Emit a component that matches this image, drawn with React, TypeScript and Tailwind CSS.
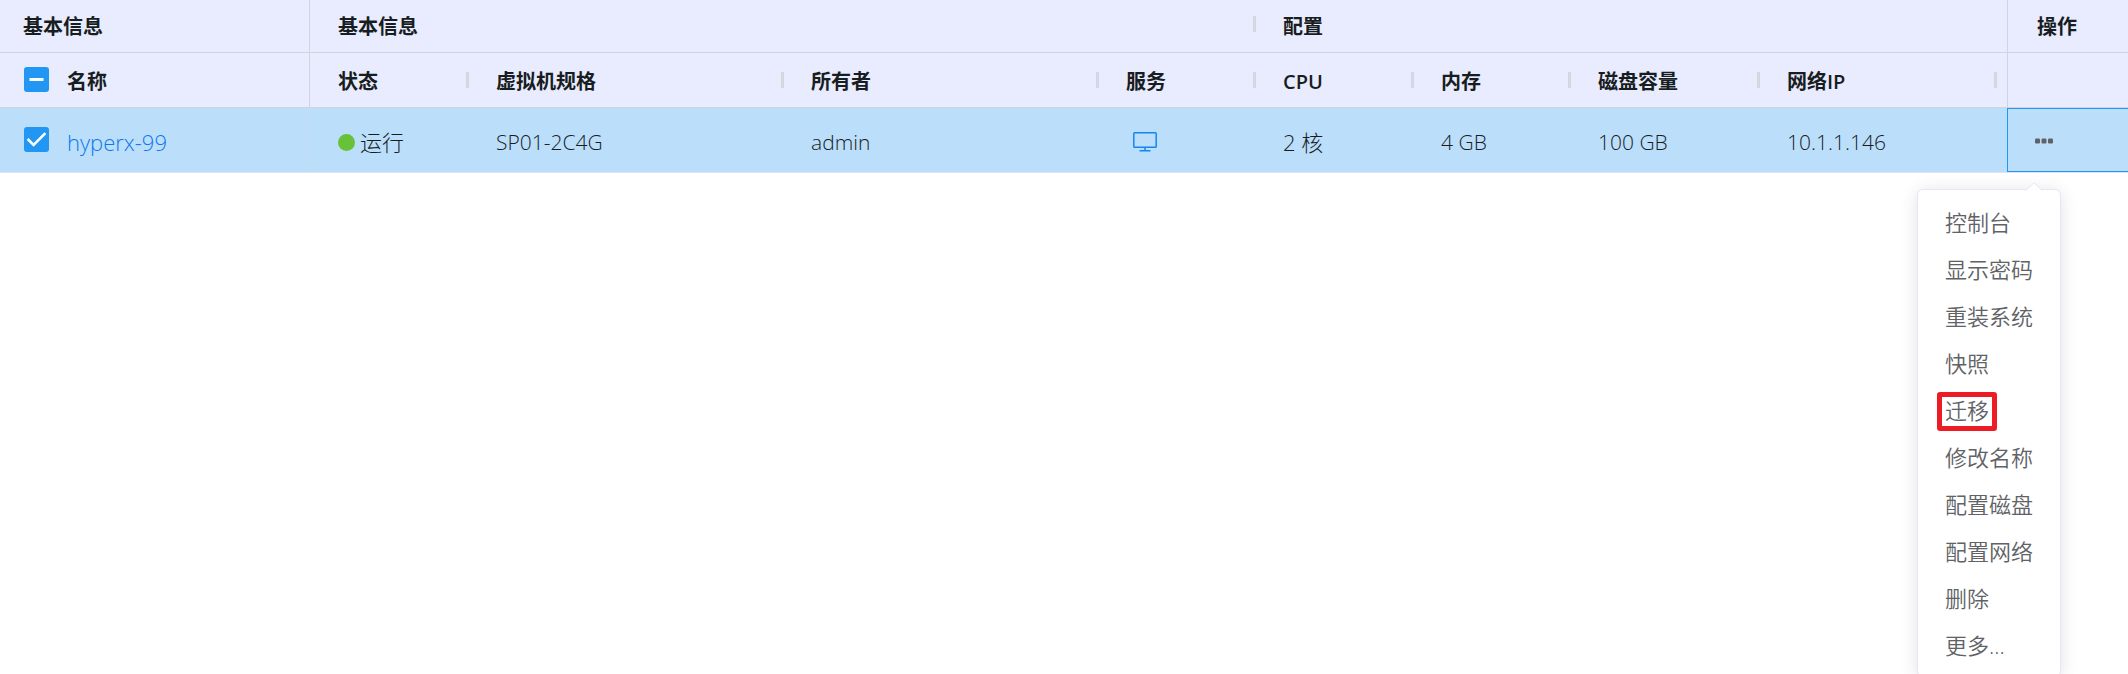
import type { ReactNode } from 'react';

const columns = ['状态', '虚拟机规格', '所有者', '服务', 'CPU', '内存', '磁盘容量', '网络IP'];

const actions = [
  '控制台',
  '显示密码',
  '重装系统',
  '快照',
  '迁移',
  '修改名称',
  '配置磁盘',
  '配置网络',
  '删除',
  '更多...',
];

function Checkbox({ label, mixed = false }: { label: string; mixed?: boolean }) {
  return (
    <span className="mb-[2px] grid size-[25px] shrink-0">
      <input
        type="checkbox"
        aria-label={label}
        defaultChecked
        className="col-start-1 row-start-1 size-[25px] appearance-none rounded-[3px] bg-[#2196f3]"
      />
      <svg
        viewBox="0 0 25 25"
        aria-hidden="true"
        className="pointer-events-none col-start-1 row-start-1 size-[25px]"
        fill="none"
        stroke="white"
      >
        {mixed ? (
          <path d="M5.5 12.5H19.5" strokeWidth="3" />
        ) : (
          <path d="M3.6 12L9.6 18L21.4 6.2" strokeWidth="2.6" />
        )}
      </svg>
    </span>
  );
}

function Handle() {
  return <span className="-mr-px h-4 w-[3px] shrink-0 bg-[#d3d7e0]" />;
}

function Cell({ children }: { children: ReactNode }) {
  return (
    <td>
      <div className="pt-[3px] pl-7">{children}</div>
    </td>
  );
}

function ActionMenu() {
  return (
    <div className="absolute top-[81px] right-[67px] z-10 w-36 rounded-md border border-[#e4e7f6] bg-white py-2 font-[350] shadow-[0_2px_18px_rgba(0,0,0,0.12)]">
      <svg
        viewBox="0 0 18 10"
        aria-hidden="true"
        className="absolute -top-2 right-[17px] h-[10px] w-[18px]"
      >
        <path d="M0 10L1 8.5L9 0.8L17 8.5L18 10Z" fill="white" />
        <path d="M0.5 8.7L9 0.8L17.5 8.7" fill="none" stroke="#e4e7f6" />
      </svg>
      <ul>
        {actions.map((action) => (
          <li key={action} className="h-[47px] pl-[27px]">
            <button type="button" className="relative h-full text-left whitespace-nowrap text-[#606266]">
              {action}
              {action === '迁移' && (
                <span className="absolute -inset-x-2 top-[6px] bottom-[2px] rounded-[3px] border-5 border-[#ed1c24]" />
              )}
            </button>
          </li>
        ))}
      </ul>
    </div>
  );
}

export default function App() {
  return (
    <main className="h-screen overflow-hidden bg-white font-['Open_Sans','Noto_Sans_CJK_SC',sans-serif] text-[22px] leading-8 font-light text-[#181d1f]">
      <table className="w-full min-w-[2000px] table-fixed border-separate border-spacing-0">
        <colgroup>
          <col className="w-[310px]" />
          <col className="w-[158px]" />
          <col className="w-[315px]" />
          <col className="w-[315px]" />
          <col className="w-[157px]" />
          <col className="w-[158px]" />
          <col className="w-[157px]" />
          <col className="w-[189px]" />
          <col />
          <col className="w-[121px]" />
        </colgroup>
        <thead className="bg-[#e9ecfe] text-left text-[20px]">
          <tr className="h-[53px] *:border-b *:border-[#d0d4dc] *:p-0 *:font-bold">
            <th className="border-r">
              <div className="pt-px pl-[23px]">基本信息</div>
            </th>
            <th colSpan={4}>
              <div className="flex items-start justify-between pt-px pl-7">
                基本信息
                <span className="flex pt-[5px]">
                  <Handle />
                </span>
              </div>
            </th>
            <th colSpan={4}>
              <div className="pt-px pl-7">配置</div>
            </th>
            <th className="border-l">
              <div className="pt-px pl-[29px]">操作</div>
            </th>
          </tr>
          <tr className="h-[55px] *:border-b *:border-[#d0d4dc] *:p-0 *:font-bold">
            <th className="border-r">
              <div className="flex items-center gap-[18px] pl-6">
                <Checkbox label="全选" mixed />
                <span className="pt-1">名称</span>
              </div>
            </th>
            {columns.map((name) => (
              <th key={name}>
                <div className={`flex items-center justify-between pl-7 ${name === '网络IP' ? 'pr-[11px]' : ''}`}>
                  <span className="pt-1">
                    {name === 'CPU' ? (
                      <span className="font-semibold">CPU</span>
                    ) : name === '网络IP' ? (
                      <>
                        网络<span className="font-semibold">IP</span>
                      </>
                    ) : (
                      name
                    )}
                  </span>
                  <Handle />
                </div>
              </th>
            ))}
            <th className="border-l" />
          </tr>
        </thead>
        <tbody className="bg-[#bbdefb]">
          <tr className="h-[65px] *:border-b *:border-[#dde5f5] *:p-0">
            <td className="border-r border-r-[#cbdcee]!">
              <div className="flex items-center gap-[18px] pl-6">
                <Checkbox label="hyperx-99" />
                <a href="#hyperx-99" className="pt-1 text-[#0d78ee]">
                  hyperx-99
                </a>
              </div>
            </td>
            <Cell>
              <div className="flex items-center gap-[5px]">
                <span className="mt-[2px] size-[17px] rounded-full bg-[#67c23a]" />
                运行
              </div>
            </Cell>
            <Cell>
              <span className="text-[21px]">SP01-2C4G</span>
            </Cell>
            <Cell>
              <span className="text-[21px]">admin</span>
            </Cell>
            <Cell>
              <button type="button" aria-label="控制台" className="block pl-[7px]">
                <svg viewBox="0 0 24 20" className="h-5 w-6" fill="none" stroke="#1486f4" strokeWidth="1.5">
                  <rect x="0.8" y="0.8" width="22.4" height="14.4" rx="0.8" />
                  <path d="M12 15V18.5M6.5 18.7H17.5" />
                </svg>
              </button>
            </Cell>
            <Cell>
              2 核
            </Cell>
            <Cell>
              <span className="text-[21px]">4 GB</span>
            </Cell>
            <Cell>
              <span className="text-[21px]">100 GB</span>
            </Cell>
            <Cell>
              <span className="text-[21px]">10.1.1.146</span>
            </Cell>
            <td className="relative">
              <div className="flex h-16 items-center border border-r-0 border-[#2196f3] pt-[2px] pl-[27px]">
                <button type="button" aria-label="操作" aria-expanded="true">
                  <svg viewBox="0 0 18 6" className="h-[6px] w-[18px]" fill="#606266">
                    <rect x="0" y="0.5" width="5" height="5" rx="1.2" />
                    <rect x="6.5" y="0.5" width="5" height="5" rx="1.2" />
                    <rect x="13" y="0.5" width="5" height="5" rx="1.2" />
                  </svg>
                </button>
              </div>
              <ActionMenu />
            </td>
          </tr>
        </tbody>
      </table>
    </main>
  );
}
